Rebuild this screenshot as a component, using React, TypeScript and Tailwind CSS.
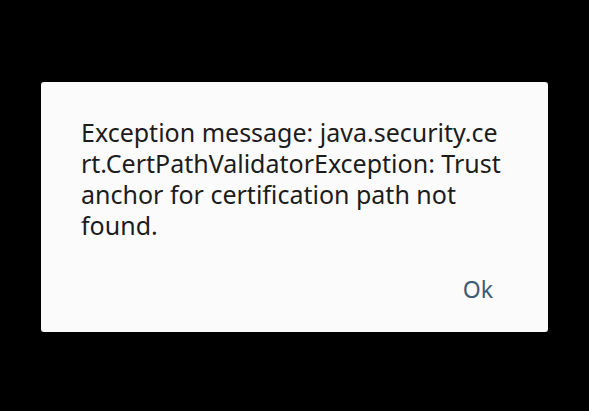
export default function App() {
  return (
    <div className="w-[589px] h-[411px] bg-black pt-[82px] pl-[41px]" style={{ fontFamily: '"Noto Sans", "Open Sans", sans-serif' }}>
      <div className="w-[507px] h-[250px] bg-[#fbfbfb] rounded-[3px] flex flex-col">
        <div className="pl-[40px] pt-[35px] text-[25px] leading-[31px] text-[#1c1c1c] whitespace-nowrap">
          <div>Exception message: java.security.ce</div>
          <div>rt.CertPathValidatorException: Trust</div>
          <div>anchor for certification path not</div>
          <div>found.</div>
        </div>
        <div className="flex justify-end pr-[55px] mt-[33px]">
          <span className="text-[23px] leading-[30px] text-[#3e5b76]">Ok</span>
        </div>
      </div>
    </div>
  );
}
